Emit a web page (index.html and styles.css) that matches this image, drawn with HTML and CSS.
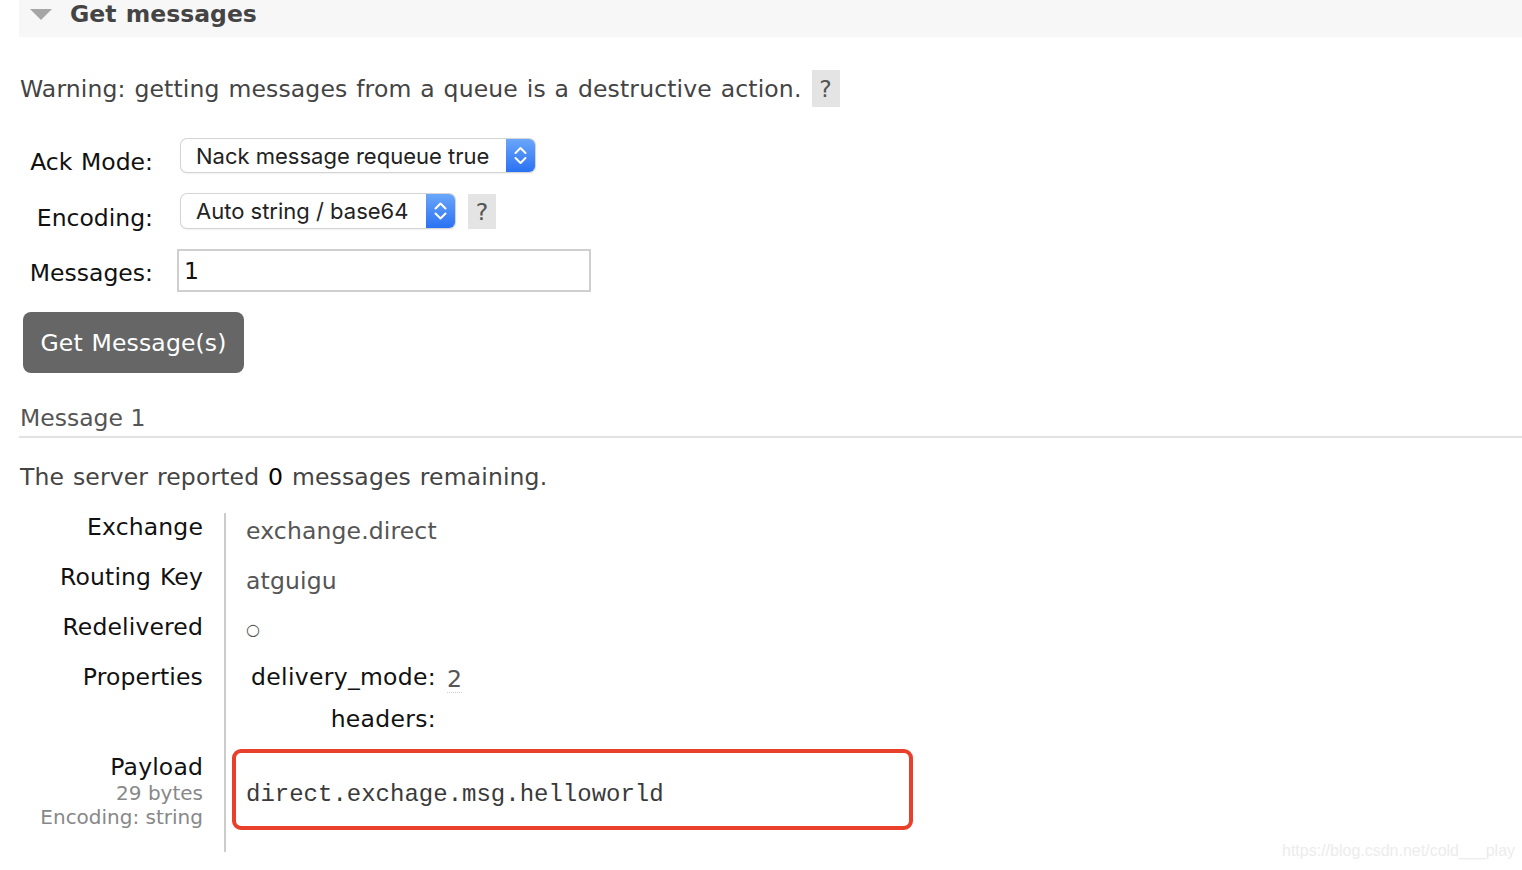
FILE: index.html
```html
<!DOCTYPE html>
<html>
<head>
<meta charset="utf-8">
<link rel="stylesheet" href="styles.css">
</head>
<body>
<div class="page">
  <div class="section-head">
    <span class="tri"></span>
    <span class="head-title">Get messages</span>
  </div>

  <div class="warning-row">
    <span class="warning">Warning: getting messages from a queue is a destructive action.</span>
    <span class="help">?</span>
  </div>

  <div class="form">
    <div class="form-row row-ack">
      <div class="flabel">Ack Mode:</div>
      <div class="fake-select sel-ack">
        <span class="sel-text">Nack message requeue true</span>
        <span class="stepper">
          <svg width="29" height="33" viewBox="0 0 29 33"><path d="M9.5 14 L14.5 9 L19.5 14" fill="none" stroke="#fff" stroke-width="2" stroke-linecap="round" stroke-linejoin="round"/><path d="M9.5 19 L14.5 24 L19.5 19" fill="none" stroke="#fff" stroke-width="2" stroke-linecap="round" stroke-linejoin="round"/></svg>
        </span>
      </div>
    </div>
    <div class="form-row row-enc">
      <div class="flabel">Encoding:</div>
      <div class="fake-select sel-enc">
        <span class="sel-text">Auto string / base64</span>
        <span class="stepper">
          <svg width="29" height="34" viewBox="0 0 29 34"><path d="M9.5 14.5 L14.5 9.5 L19.5 14.5" fill="none" stroke="#fff" stroke-width="2" stroke-linecap="round" stroke-linejoin="round"/><path d="M9.5 19.5 L14.5 24.5 L19.5 19.5" fill="none" stroke="#fff" stroke-width="2" stroke-linecap="round" stroke-linejoin="round"/></svg>
        </span>
      </div>
      <span class="help help-enc">?</span>
    </div>
    <div class="form-row row-msg">
      <div class="flabel">Messages:</div>
      <div class="text-input">1</div>
    </div>
  </div>

  <div class="btn">Get Message(s)</div>

  <div class="msg-title">Message 1</div>

  <p class="server">The server reported <b>0</b> messages remaining.</p>

  <div class="details">
    <div class="dl">Exchange</div>
    <div class="dv">exchange.direct</div>

    <div class="dl">Routing Key</div>
    <div class="dv">atguigu</div>

    <div class="dl">Redelivered</div>
    <div class="dv"><span class="circ">○</span></div>

    <div class="dl">Properties</div>
    <div class="dv">
      <div class="props">
        <div class="pl">delivery_mode:</div>
        <div class="pv"><span class="abbr">2</span></div>
        <div class="pl">headers:</div>
        <div class="pv"></div>
      </div>
    </div>

    <div class="dl dl-payload">
      <div>Payload</div>
      <div class="sub">29 bytes</div>
      <div class="sub">Encoding: string</div>
    </div>
    <div class="dv dv-payload">
      <div class="payload-box">direct.exchage.msg.helloworld</div>
    </div>
  </div>

  <div class="watermark">https://blog.csdn.net/cold___play</div>
</div>
</body>
</html>
```
FILE: styles.css
```css
html, body {
  margin: 0;
  padding: 0;
  background: #fff;
}
body {
  font-family: "DejaVu Sans", Verdana, sans-serif;
  font-size: 23.5px;
  line-height: 28px;
  letter-spacing: 0.14px;
  word-spacing: 1.2px;
  color: #444;
  width: 1522px;
  height: 870px;
  overflow: hidden;
}
.page {
  position: relative;
  height: 870px;
}
.section-head {
  margin-left: 19px;
  height: 37px;
  background: #f7f7f7;
  display: flex;
  align-items: flex-start;
}
.tri {
  width: 0;
  height: 0;
  margin-left: 11px;
  margin-top: 9px;
  border-left: 11px solid transparent;
  border-right: 11px solid transparent;
  border-top: 11px solid #a6a6a6;
}
.head-title {
  margin-left: 18px;
  font-weight: bold;
  color: #444;
  line-height: 28px;
  letter-spacing: 0;
}
.warning-row {
  margin-top: 33px;
  margin-left: 20px;
  height: 37px;
  display: flex;
  align-items: center;
}
.help {
  display: inline-flex;
  align-items: center;
  justify-content: center;
  width: 28px;
  height: 37px;
  background: #e4e4e4;
  color: #555;
  margin-left: 10px;
}
.form {
  margin-left: 19px;
}
.form-row {
  display: flex;
  align-items: flex-start;
}
.row-ack { margin-top: 32px; height: 33px; }
.row-enc { margin-top: 22px; height: 35px; }
.row-msg { margin-top: 20px; height: 43px; }
.flabel {
  width: 134px;
  text-align: right;
  color: #111;
  letter-spacing: 0;
}
.row-ack .flabel { margin-top: 9px; }
.row-enc .flabel { margin-top: 10px; }
.row-msg .flabel { margin-top: 10px; }
.fake-select {
  margin-left: 28px;
  display: flex;
  align-items: stretch;
  background: #fff;
  border-radius: 6px;
  box-shadow: 0 0 0 1px #d4d4d4, 0 1px 2px rgba(0,0,0,0.18);
  font-family: Inter, "Noto Sans", sans-serif;
  font-size: 22px;
  letter-spacing: 0;
  word-spacing: 0;
  color: #222;
  overflow: hidden;
}
.sel-ack { width: 354px; height: 33px; }
.sel-enc { width: 274px; height: 34px; }
.sel-text {
  flex: 1;
  padding-left: 15px;
  display: flex;
  align-items: center;
}
.stepper {
  width: 29px;
  background: linear-gradient(#6aa6fa, #2a72f3);
  display: flex;
}
.help-enc {
  margin-left: 13px;
  height: 35px;
}
.text-input {
  margin-left: 24px;
  width: 405px;
  height: 39px;
  border: 2px solid #cfcfcf;
  padding-left: 5px;
  color: #111;
  line-height: 40px;
  box-sizing: content-box;
}
.btn {
  margin-left: 23px;
  margin-top: 20px;
  width: 221px;
  height: 61px;
  border-radius: 8px;
  background: #666;
  color: #fff;
  display: flex;
  align-items: center;
  justify-content: center;
}
.msg-title {
  margin-left: 19px;
  margin-top: 31px;
  padding-left: 1px;
  padding-bottom: 4px;
  border-bottom: 2px solid #e2e2e2;
  color: #555;
  letter-spacing: 0;
  word-spacing: 0;
}
.server {
  margin: 25px 0 0 20px;
}
.server b {
  font-weight: normal;
  color: #000;
}
.details {
  margin-top: 22px;
  display: grid;
  grid-template-columns: 203px 1fr;
  grid-template-rows: 50px 50px 50px 90px 99px;
}
.dl {
  text-align: right;
  color: #111;
}
.dv {
  margin-left: 21px;
  border-left: 2px solid #cccccc;
  padding-left: 20px;
  color: #555;
}
.details > .dv:nth-child(2),
.details > .dv:nth-child(4) {
  padding-top: 4px;
}
.circ {
  font-size: 16px;
  display: inline-block;
  padding-top: 3px;
}
.props {
  display: grid;
  grid-template-columns: 190px auto;
  grid-template-rows: 42px 42px;
}
.pl {
  text-align: right;
  color: #111;
  letter-spacing: 0.3px;
}
.pv {
  padding-left: 11px;
}
.abbr {
  display: inline-block;
  padding-top: 3px;
  border-bottom: 1px dotted #ccc;
  line-height: 26px;
}
.dl-payload .sub {
  font-size: 20px;
  line-height: 24px;
  letter-spacing: 0;
  word-spacing: 0;
  color: #888;
}
.dv-payload {
  padding-left: 6px;
}
.payload-box {
  margin-top: -4px;
  width: 681px;
  height: 81px;
  border: 4px solid #e8402a;
  border-radius: 9px;
  padding-left: 10px;
  padding-top: 28px;
  box-sizing: border-box;
  font-family: "Liberation Mono", "Courier New", monospace;
  font-size: 24px;
  letter-spacing: 0;
  word-spacing: 0;
  color: #3a3a3a;
}
.watermark {
  position: absolute;
  left: 1282px;
  top: 841px;
  font-family: "Liberation Sans", Arial, sans-serif;
  font-size: 16px;
  line-height: 20px;
  letter-spacing: 0;
  word-spacing: 0;
  color: #ececec;
}
```
